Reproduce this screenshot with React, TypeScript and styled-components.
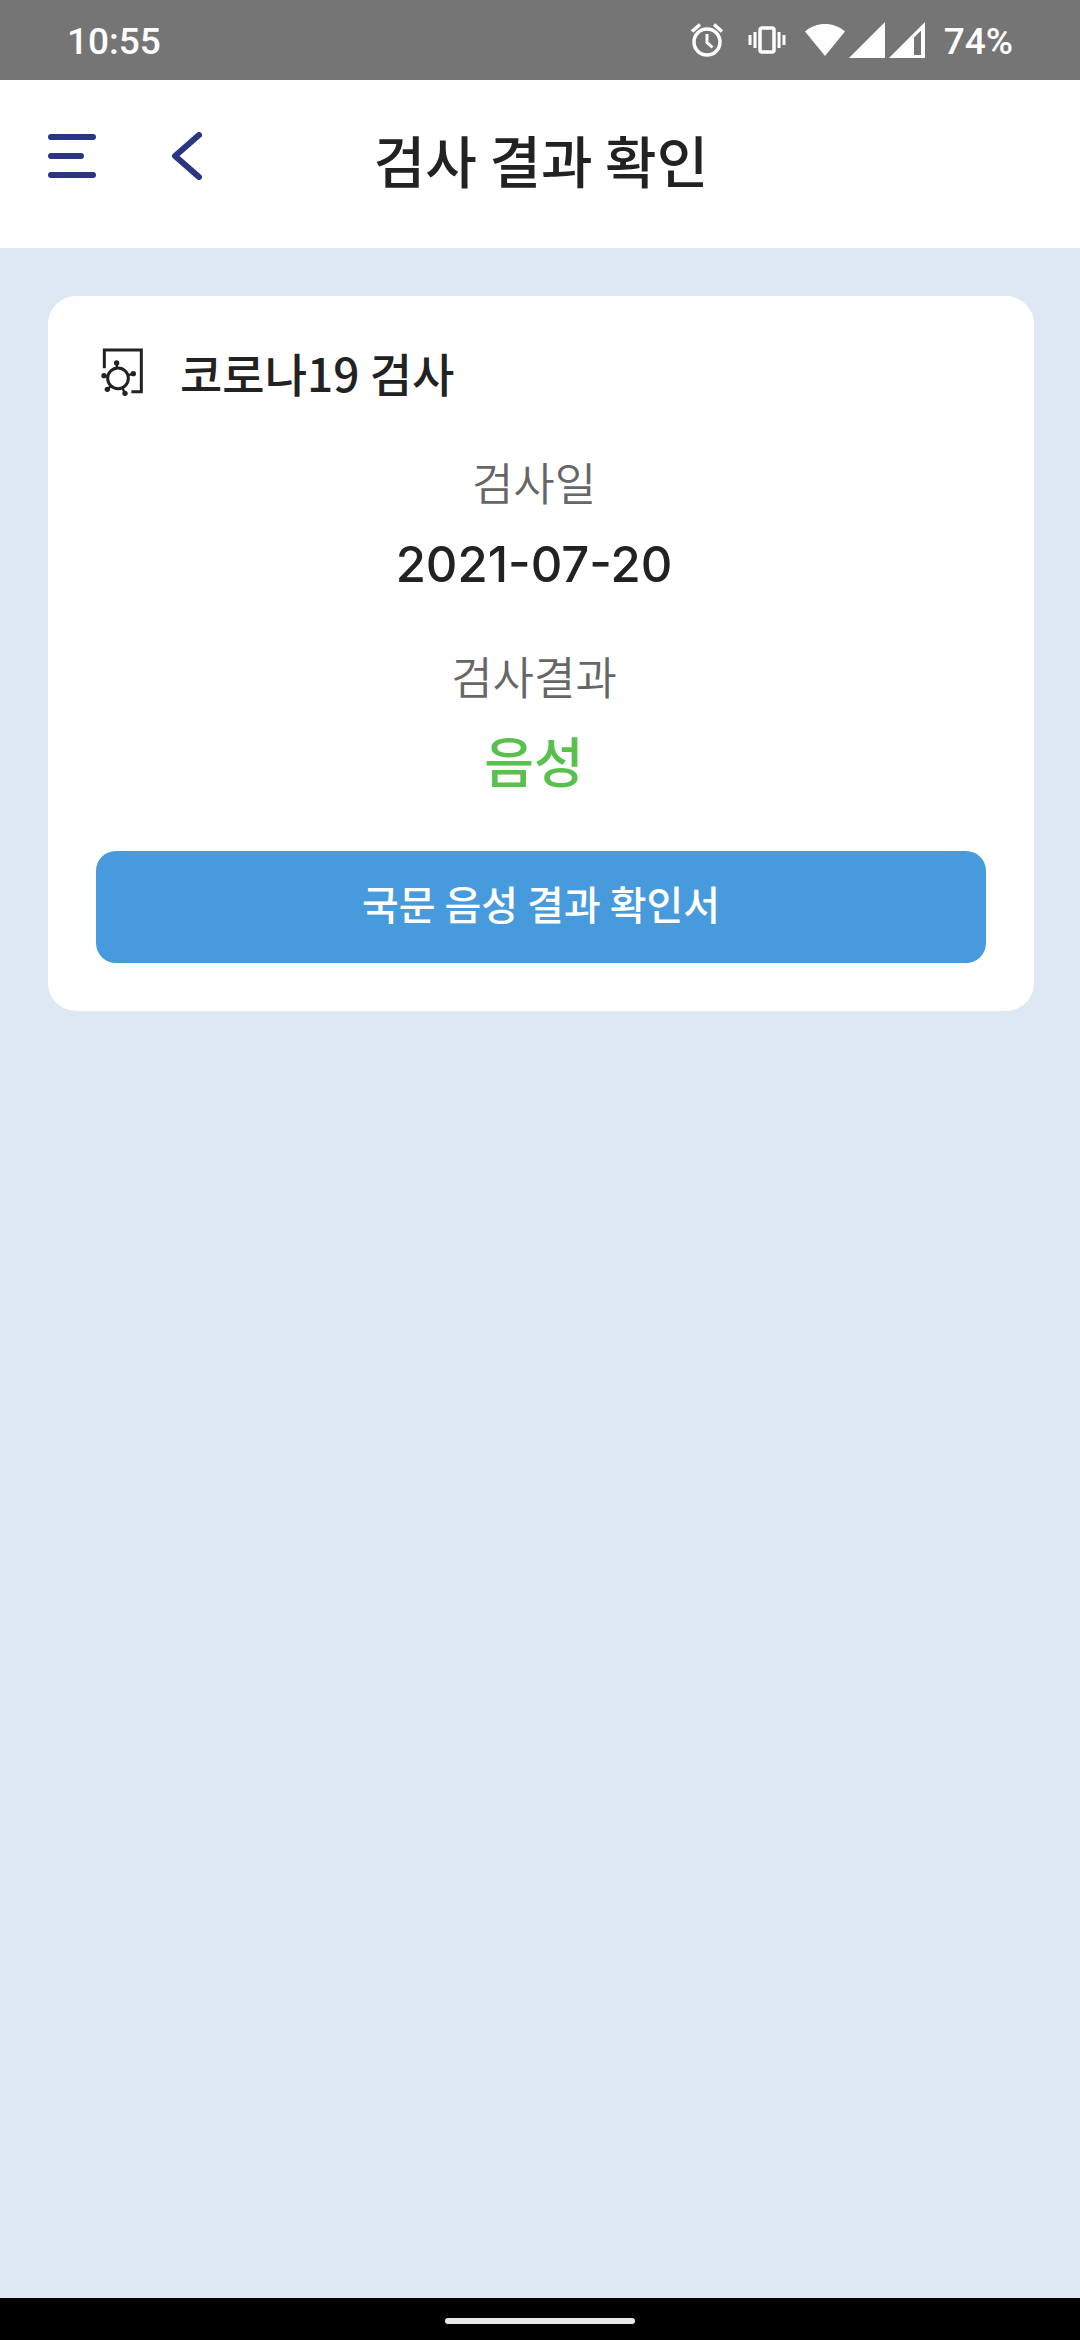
import React from "react";
import styled, { createGlobalStyle } from "styled-components";

const korean = `"Noto Sans CJK KR", "Noto Sans", sans-serif`;

const GlobalStyle = createGlobalStyle`
  * { box-sizing: border-box; }
  body { margin: 0; background: #dee8f2; }
  h1, h2, dl, dt, dd { margin: 0; font-weight: inherit; }
  button { border: 0; padding: 0; background: none; font: inherit; cursor: pointer; }
  svg { display: block; flex: none; }
`;

const Screen = styled.div`
  display: flex;
  flex-direction: column;
  min-height: 100vh;
  color: #222;
  font-family: ${korean};
`;

const StatusBar = styled.div`
  display: flex;
  align-items: center;
  justify-content: space-between;
  height: 80px;
  padding: 0 67px;
  background: #757575;
  color: #fff;
`;

const StatusText = styled.span`
  padding-top: 4px;
  font: 500 37px/44px Roboto, sans-serif;
`;

const StatusGroup = styled.div<{ $gap: number }>`
  display: flex;
  align-items: center;
  gap: ${(p) => p.$gap}px;
`;

const Header = styled.header`
  display: grid;
  grid-template-columns: 1fr auto 1fr;
  align-items: center;
  height: 168px;
  padding: 0 46px 10px 48px;
  background: #fff;
`;

const Nav = styled.nav`
  display: flex;
  align-items: center;
  gap: 76px;
  padding-bottom: 6px;
`;

const IconButton = styled.button`
  color: #2b3581;
`;

const Title = styled.h1`
  font-size: 56px;
  font-weight: 500;
  line-height: 80px;
`;

const Main = styled.main`
  flex: 1;
  padding: 48px 46px 48px 48px;
`;

const Card = styled.section`
  padding: 48px;
  border-radius: 28px;
  background: #fff;
`;

const CardHead = styled.div`
  display: flex;
  align-items: center;
  gap: 36px;
`;

const CardTitle = styled.h2`
  font-size: 46px;
  font-weight: 500;
  line-height: 56px;
`;

const Facts = styled.dl`
  display: flex;
  flex-direction: column;
  gap: 36px;
  padding: 48px 14px 51px 0;
  text-align: center;
`;

const Fact = styled.div`
  display: flex;
  flex-direction: column;
  gap: 10px;
`;

const Label = styled.dt`
  color: #666;
  font-size: 45px;
  font-weight: 350;
  line-height: 68px;
`;

const DateValue = styled.dd`
  font: 500 49px/78px Inter, sans-serif;
  padding-bottom: 2px;
`;

const ResultValue = styled.dd`
  color: #58c04c;
  font-size: 54px;
  font-weight: 500;
  line-height: 80px;
`;

const PrimaryButton = styled.button`
  && {
    display: block;
    width: 100%;
    height: 112px;
    padding-bottom: 8px;
    border-radius: 20px;
    background: #479bdd;
    color: #fff;
    font-size: 40px;
    font-weight: 500;
  }
`;

const HomeBar = styled.footer`
  display: flex;
  align-items: center;
  justify-content: center;
  height: 42px;
  padding-top: 4px;
  background: #000;
`;

const HomePill = styled.div`
  width: 190px;
  height: 6px;
  border-radius: 3px;
  background: #e9e7ea;
`;

const AlarmIcon = () => (
  <svg width="34" height="36" viewBox="0 0 34 36" fill="none" stroke="#fff">
    <circle cx="17" cy="20" r="13" strokeWidth="3.5" />
    <path d="M2 9.500l8-7M32 9.500l-8-7" strokeWidth="3.600" />
    <path d="M17 12v8.500l5.500 5" strokeWidth="3" />
  </svg>
);

const VibrateIcon = () => (
  <svg width="38" height="28" viewBox="0 0 38 28" fill="none" stroke="#fff">
    <rect x="12" y="2" width="14" height="24" rx="2" strokeWidth="3.500" />
    <path d="M7 6v16M31 6v16M2 9v10M36 9v10" strokeWidth="3" />
  </svg>
);

const WifiIcon = () => (
  <svg width="40" height="34" viewBox="0 0 40 34" fill="#fff">
    <path d="M0 8.500C11-1.500 29-1.500 40 8.500L20 33z" />
  </svg>
);

const SignalIcon = ({ partial = false }: { partial?: boolean }) => (
  <svg width="36" height="36" viewBox="0 0 36 36" fill="#fff" fillRule="evenodd">
    <path d={partial ? "M0 36L36 0V36zM25 15.500V33H32V8.500z" : "M0 36L36 0V36z"} />
  </svg>
);

const MenuIcon = () => (
  <svg width="48" height="48" viewBox="0 0 48 48" fill="none" stroke="currentColor" strokeWidth="6" strokeLinecap="round">
    <path d="M3 5H45M3 24H33M3 43H45" />
  </svg>
);

const BackIcon = () => (
  <svg width="30" height="48" viewBox="0 0 30 48" fill="none" stroke="currentColor" strokeWidth="6" strokeLinecap="round" strokeLinejoin="round">
    <path d="M27 3L3 24L27 45" />
  </svg>
);

const VirusTestIcon = () => (
  <svg width="48" height="48" viewBox="18 37 144 144" fill="none" stroke="#222" strokeWidth="9">
    <path d="M43 98V43H154V168H124" />
    <circle cx="84" cy="128" r="31" />
    <path d="M81 97L80 82M113 119L130 114M53 122L41 120M64 150L52 161M97 157L105 173" strokeWidth="7" />
    <g fill="#222" stroke="none">
      <circle cx="80" cy="82" r="8" />
      <circle cx="130" cy="114" r="8" />
      <circle cx="42" cy="120" r="8" />
      <circle cx="52" cy="161" r="8" />
      <circle cx="105" cy="173" r="8" />
    </g>
  </svg>
);

export default function App() {
  return (
    <Screen>
      <GlobalStyle />
      <StatusBar>
        <StatusText>10:55</StatusText>
        <StatusGroup $gap={19}>
          <StatusGroup $gap={24}>
            <AlarmIcon />
            <VibrateIcon />
          </StatusGroup>
          <StatusGroup $gap={4}>
            <WifiIcon />
            <SignalIcon />
            <SignalIcon partial />
          </StatusGroup>
          <StatusText>74%</StatusText>
        </StatusGroup>
      </StatusBar>
      <Header>
        <Nav>
          <IconButton type="button" aria-label="메뉴">
            <MenuIcon />
          </IconButton>
          <IconButton type="button" aria-label="뒤로">
            <BackIcon />
          </IconButton>
        </Nav>
        <Title>검사 결과 확인</Title>
      </Header>
      <Main>
        <Card>
          <CardHead>
            <VirusTestIcon />
            <CardTitle>코로나19 검사</CardTitle>
          </CardHead>
          <Facts>
            <Fact>
              <Label>검사일</Label>
              <DateValue>2021-07-20</DateValue>
            </Fact>
            <Fact>
              <Label>검사결과</Label>
              <ResultValue>음성</ResultValue>
            </Fact>
          </Facts>
          <PrimaryButton type="button">국문 음성 결과 확인서</PrimaryButton>
        </Card>
      </Main>
      <HomeBar>
        <HomePill />
      </HomeBar>
    </Screen>
  );
}
